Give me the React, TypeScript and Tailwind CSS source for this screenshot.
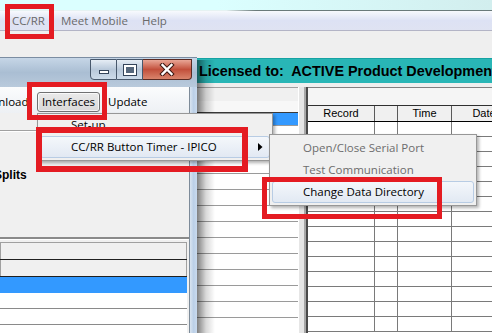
import React from "react";

function CaptionButtons() {
  return (
    <div className="flex h-[21px] mr-[5px] mt-px">
      <div className="w-[27px] h-[21px] rounded-bl-[4px] border border-[#48586c] bg-gradient-to-b from-[#e6edf5] via-[#b8c8da] to-[#cddbea] flex items-end justify-center pb-[5px]">
        <div className="w-[10px] h-[4px] bg-white border border-[#34445a]" />
      </div>
      <div className="w-[26px] h-[21px] border-y border-r border-[#48586c] bg-gradient-to-b from-[#e6edf5] via-[#b8c8da] to-[#cddbea] flex items-center justify-center">
        <div className="w-[12px] h-[10px] border-[2px] border-white outline outline-1 outline-[#34445a] bg-[#56677c]" />
      </div>
      <div className="w-[49px] h-[21px] rounded-br-[4px] border-y border-r border-[#5a2a22] bg-gradient-to-b from-[#e8a696] via-[#c24f3b] to-[#d9846c] flex items-center justify-center">
        <svg width="16" height="13" viewBox="0 0 16 13">
          <path d="M3.5 2 L12.5 11 M12.5 2 L3.5 11" stroke="#3c1712" strokeWidth="4.4" strokeLinecap="square" />
          <path d="M3.5 2 L12.5 11 M12.5 2 L3.5 11" stroke="#ffffff" strokeWidth="2.4" strokeLinecap="square" />
        </svg>
      </div>
    </div>
  );
}

function MainApp() {
  const rightRows = Array.from({ length: 14 });
  const leftRows = Array.from({ length: 13 });
  return (
    <div className="flex flex-col h-[333px] w-[492px] bg-[#efefef]">
      <div className="h-[10px] bg-gradient-to-r from-[#dbffff] from-[44%] to-[#d2eeee]" />
      <div className="h-px bg-gradient-to-r from-[#e6f2f2] from-[46%] to-[#6a7a7a] to-[52%]" />
      <div className="h-[20px] flex items-center pt-[1px] bg-gradient-to-b from-[#f7f9fd] via-[#dde2f4] to-[#dfe3f2] border-b border-[#b3b4c6] text-[11.5px] text-[#6a6a6a] font-['Open_Sans',sans-serif]">
        <span className="ml-[12px] w-[49px]">CC/RR</span>
        <span className="w-[81px]">Meet Mobile</span>
        <span>Help</span>
      </div>
      <div className="h-[27px] bg-[#efefef]" />
      <div className="h-[25px] bg-[#29b6b6] border-t border-[#15a3a3] flex items-center pl-[199px] pt-[1px] overflow-hidden">
        <span className="whitespace-pre font-bold text-[14.4px] text-black font-['Liberation_Sans',Arial,sans-serif]">
          Licensed to:  ACTIVE Product Development
        </span>
      </div>
      <div className="h-[4px] bg-[#efefef]" />
      <div className="flex flex-1 min-h-0 overflow-hidden">
        {/* left background panel */}
        <div className="w-[298px] flex flex-col">
          <div className="h-[18px] bg-[#f0f0f0] border-t border-[#a0a0a0]" />
          <div className="h-px bg-[#111111]" />
          <div className="h-[15px] bg-[#f7f7f7]" />
          <div className="h-px bg-[#3a3a3a]" />
          <div className="h-[16px] bg-[#3399ff]" />
          {leftRows.map((_, i) => (
            <div key={i} className="h-[16px] shrink-0 bg-white border-t border-[#9a9a9a]" />
          ))}
        </div>
        {/* splitter */}
        <div className="w-[8px] bg-[#e6e6e6] border-l border-white border-r-2 border-r-[#a8a8a8]" />
        {/* right background table */}
        <div className="flex-1 flex flex-col border-l-2 border-[#4a4a4a] bg-white overflow-hidden">
          <div className="h-[18px] shrink-0 bg-[#f5f5f5] border-t border-[#808080]" />
          <div className="h-px shrink-0 bg-[#303030]" />
          <div className="h-[15px] shrink-0 grid grid-cols-[67px_23px_54px_64px] bg-[#f0f0f0] text-[11px] text-black font-['Liberation_Sans',Arial,sans-serif] leading-[15px]">
            <div className="border-r border-[#5a5a5a] text-center">Record</div>
            <div className="border-r border-[#5a5a5a]" />
            <div className="border-r border-[#5a5a5a] text-center">Time</div>
            <div className="text-center">Date</div>
          </div>
          <div className="h-px shrink-0 bg-black" />
          {rightRows.map((_, i) => (
            <div key={i} className="h-[15px] shrink-0 grid grid-cols-[67px_23px_54px_64px] border-b border-[#7a7a7a]">
              <div className="border-r border-[#7a7a7a]" />
              <div className="border-r border-[#7a7a7a]" />
              <div className="border-r border-[#7a7a7a]" />
              <div />
            </div>
          ))}
        </div>
      </div>
    </div>
  );
}

function SmallWindow() {
  return (
    <div className="absolute left-0 top-[57px] w-[197px] h-[276px] flex flex-col">
      <div className="h-[30px] shrink-0 flex justify-end items-start bg-gradient-to-b from-[#c6d6e7] via-[#aabed3] to-[#b9cadc] border-t border-[#7b8da2]">
        <CaptionButtons />
      </div>
      <div className="flex flex-1 min-h-0">
        <div className="w-[189px] flex flex-col bg-[#f0f0f0] overflow-hidden">
          {/* menu bar */}
          <div className="h-[26px] shrink-0 flex items-end pb-px bg-gradient-to-b from-[#fbfcfd] to-[#edf0f4] text-[11.5px] text-black font-['Open_Sans',sans-serif] whitespace-nowrap">
            <div className="w-[54px] -ml-[26px] shrink-0 h-[20px] leading-[20px]">Download</div>
            <div className="ml-[9px] w-[63px] shrink-0 h-[20px] rounded-[3px] border border-[#707172] bg-gradient-to-b from-[#eaeaea] to-[#d9d9d9] shadow-[inset_0_0_0_1px_rgba(255,255,255,0.7)] flex items-center justify-center leading-[18px]">
              Interfaces
            </div>
            <div className="ml-[8px] h-[20px] leading-[20px]">Update</div>
          </div>
          {/* content */}
          <div className="h-[124px] shrink-0 flex flex-col">
            <div className="mt-[17px] h-[2px] border-t border-[#a0a0a0] border-b border-b-white" />
            <div className="mt-[36px] -ml-[6px] font-bold text-[12px] leading-[14px] text-black font-['Liberation_Sans',Arial,sans-serif]">
              Splits
            </div>
          </div>
          <div className="h-[2px] shrink-0 bg-[#8a8a8a]" />
          <div className="h-px shrink-0 bg-white" />
          <div className="mt-[2px] mr-[2px] flex flex-col">
            <div className="h-[17px] bg-[#f0f0f0] border-t border-x border-[#a0a0a0]" />
            <div className="h-px bg-[#202020]" />
            <div className="h-[16px] bg-[#f0f0f0] border-x border-[#a0a0a0]" />
            <div className="h-px bg-[#202020]" />
            <div className="h-[16px] bg-[#3399ff]" />
            <div className="h-[16px] bg-white border-b border-[#8a8a8a]" />
            <div className="h-[16px] bg-white border-b border-[#8a8a8a]" />
            <div className="h-[16px] bg-white border-b border-[#8a8a8a]" />
          </div>
        </div>
        <div className="w-[8px] border-l border-[#7d8b99] bg-gradient-to-r from-[#d9e4f0] via-[#bcd0e7] to-[#c9daee]" />
      </div>
    </div>
  );
}

function MenuItem({
  label,
  highlighted,
  disabled,
  arrow,
}: {
  label: string;
  highlighted?: boolean;
  disabled?: boolean;
  arrow?: boolean;
}) {
  return (
    <div
      className={
        highlighted
          ? "mx-[2px] h-[22px] flex items-center pl-[30px] rounded-[3px] border border-[#b8cce4] bg-gradient-to-b from-[#f4f7fb] to-[#e2e9f3]"
          : "mx-[2px] h-[22px] flex items-center pl-[30px] border border-transparent"
      }
    >
      <span className={disabled ? "text-[#6d6d6d]" : "text-black"}>{label}</span>
      {arrow && (
        <svg className="ml-auto mr-[6px]" width="5" height="8" viewBox="0 0 5 8">
          <path d="M0 0 L4.5 4 L0 8 Z" fill="#000" />
        </svg>
      )}
    </div>
  );
}

export default function App() {
  return (
    <div className="relative w-[492px] h-[333px] overflow-hidden bg-[#efefef] font-['Open_Sans',sans-serif]">
      <MainApp />
      {/* shadow of small window */}
      <div className="absolute left-[197px] top-[60px] w-[18px] bottom-0 bg-gradient-to-r from-black/50 via-black/15 to-transparent" />
      <SmallWindow />

      {/* Interfaces menu */}
      <div className="absolute left-[37px] top-[113px] w-[236px] pt-0 pb-[2px] bg-[#f0f0f0] border border-[#979797] shadow-[2px_2px_3px_rgba(0,0,0,0.3)] text-[11.5px]">
        <MenuItem label="Set-up" />
        <MenuItem label="CC/RR Button Timer - IPICO" highlighted arrow />
      </div>

      {/* Submenu */}
      <div className="absolute left-[269px] top-[134px] w-[208px] pt-[2px] pb-[2px] bg-[#f0f0f0] border border-[#979797] shadow-[2px_2px_3px_rgba(0,0,0,0.3)] text-[11.5px]">
        <MenuItem label="Open/Close Serial Port" disabled />
        <MenuItem label="Test Communication" disabled />
        <MenuItem label="Change Data Directory" highlighted />
      </div>

      {/* red highlight boxes */}
      <div className="absolute left-[5px] top-[4px] w-[49px] h-[35px] border-[5px] border-[#e41b22]" />
      <div className="absolute left-[27px] top-[82px] w-[80px] h-[38px] border-[5px] border-[#e41b22]" />
      <div className="absolute left-[36px] top-[127px] w-[212px] h-[45px] border-[6px] border-[#e41b22]" />
      <div className="absolute left-[262px] top-[177px] w-[180px] h-[42px] border-[5px] border-[#e41b22]" />
    </div>
  );
}
